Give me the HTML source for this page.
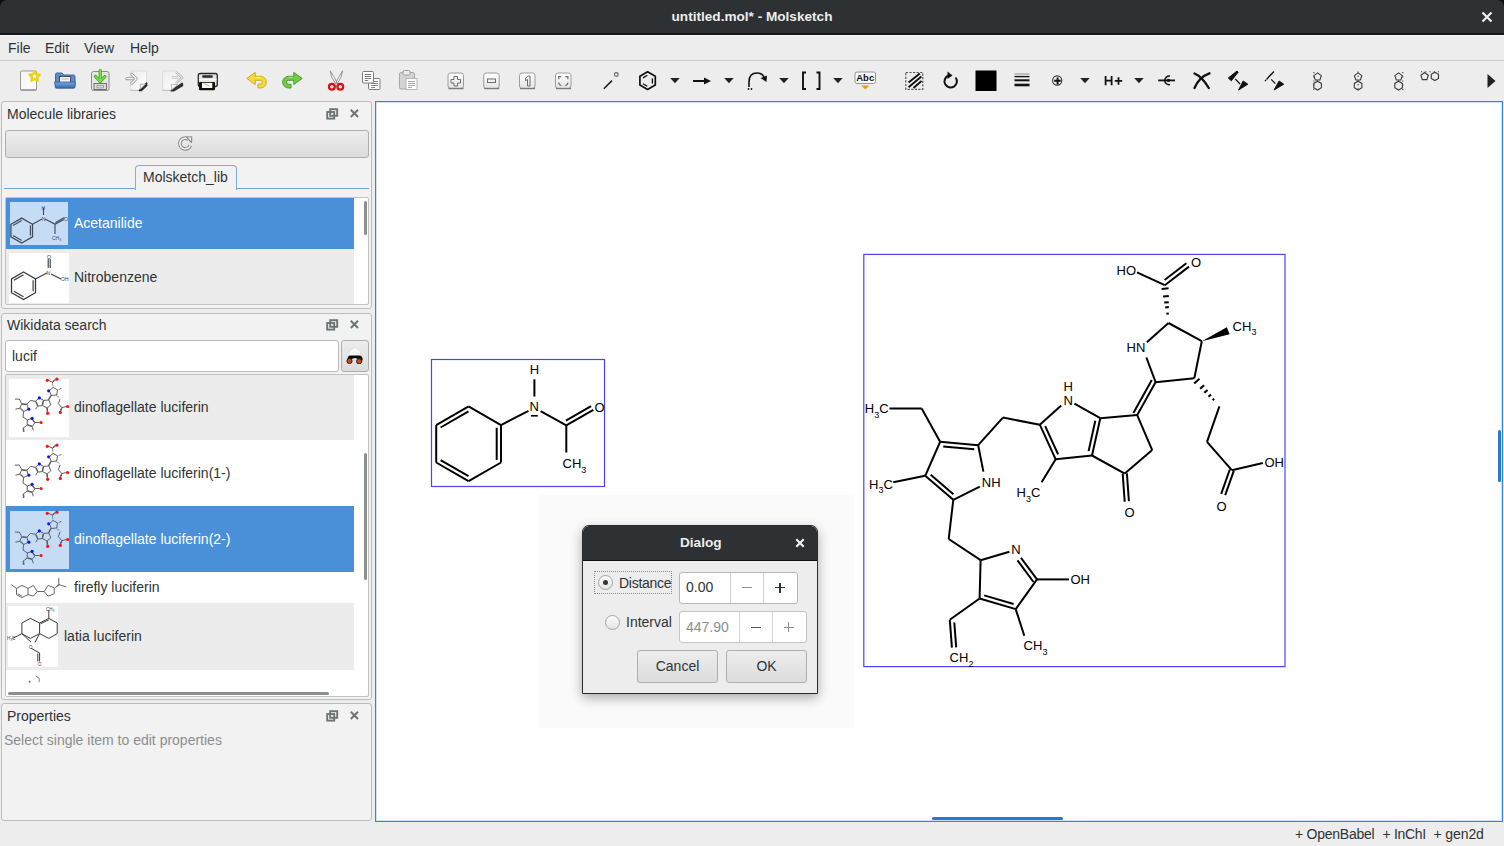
<!DOCTYPE html>
<html><head><meta charset="utf-8">
<style>
*{margin:0;padding:0;box-sizing:border-box}
html,body{width:1504px;height:846px;overflow:hidden;background:#ededed;font-family:"Liberation Sans",sans-serif;font-size:14px;color:#2e3436}
.a{position:absolute}
#title{left:0;top:0;width:1504px;height:35px;background:#2d3134;border-bottom:2px solid #141617;border-radius:7px 7px 0 0}
#title .t{left:0;width:1504px;top:9px;text-align:center;color:#eeeeec;font-weight:bold;font-size:13.6px;line-height:16px}
#menubar{left:0;top:35px;width:1504px;height:25px;background:#ededed;border-top:1px solid #f8f8f8}
#menubar span{position:absolute;top:4px;line-height:16px;color:#2e3436}
#sep{left:0;top:60px;width:1504px;height:1px;background:#cfcfcf}
.dock{background:#f2f2f2;border:1px solid #bdbdbd;border-radius:3px}
.dt{position:absolute;left:7px;line-height:16px;color:#2e3436}
.frame{background:#fff;border:1px solid #c2c2c2;border-radius:2px;overflow:hidden}
.row{position:absolute;left:0;width:348px}
.sel{background:#4a90d9;color:#fff}
.alt{background:#ececec}
.lbl{position:absolute;line-height:16px}
#canvas{left:375px;top:101px;width:1128px;height:721px;background:#fff;border:1px solid #3584e4;box-shadow:inset 0 0 0 1px rgba(53,132,228,0.25)}
#status{left:0;top:822px;width:1504px;height:24px;background:#ededed}
.btn{background:linear-gradient(#ededed,#dcdcdc);border:1px solid #aeaeae;border-radius:3px}
</style></head><body>
<div class="a" style="left:0;top:0;width:1504px;height:12px;background:#0c0d0e"></div>
<div id="title" class="a"><div class="t a">untitled.mol* - Molsketch</div>
<svg class="a" style="left:1481px;top:11px" width="12" height="12" viewBox="0 0 12 12"><path d="M1.5 1.5L10.5 10.5M10.5 1.5L1.5 10.5" stroke="#eeeeec" stroke-width="2.2"/></svg>
</div>
<div id="menubar" class="a"><span style="left:8px">File</span><span style="left:45px">Edit</span><span style="left:84px">View</span><span style="left:130px">Help</span></div>
<div id="sep" class="a"></div>
<svg class="a" style="left:0;top:0" width="1504" height="101" viewBox="0 0 1504 101">
<defs>
<linearGradient id="gz" x1="0" y1="0" x2="0" y2="1"><stop offset="0" stop-color="#ffffff"/><stop offset="1" stop-color="#e4e4e4"/></linearGradient>
<linearGradient id="gp" x1="0" y1="0" x2="1" y2="1"><stop offset="0" stop-color="#f4f4f4"/><stop offset="1" stop-color="#ffffff"/></linearGradient>
<linearGradient id="gb" x1="0" y1="0" x2="0" y2="1"><stop offset="0" stop-color="#7ea6d8"/><stop offset="1" stop-color="#3a6db5"/></linearGradient>
</defs>
<!-- new -->
<rect x="20.5" y="71" width="16" height="19" rx="1" fill="url(#gp)" stroke="#9a9a9a" stroke-width="1"/>
<path d="M20.5 90 h16" stroke="#8a8a8a" stroke-width="1.2"/>
<path d="M34.6 71.0 L36.1 74.3 L39.7 74.7 L37.1 77.2 L37.8 80.8 L34.6 79.0 L31.4 80.8 L32.1 77.2 L29.5 74.7 L33.1 74.3Z" fill="#fffbe0" stroke="#eed21a" stroke-width="2.4" stroke-linejoin="round"/>
<!-- open -->
<path d="M55.5 74.5 q0-1.5 1.5-1.5 h5 l2 2 h9.5 q1.5 0 1.5 1.5 v10 q0 1.5-1.5 1.5 h-16.5 q-1.5 0-1.5-1.5z" fill="#5a8ccc" stroke="#3b69a8" stroke-width="1"/>
<rect x="59.5" y="76.5" width="11" height="6" fill="#f2f2f2" stroke="#333" stroke-width="0.8"/>
<path d="M61.5 79 h7" stroke="#aaa" stroke-width="0.8"/>
<path d="M54.5 82 h21 l-1 6 h-19z" fill="url(#gb)" stroke="#2f5fa0" stroke-width="0.8"/>
<!-- save -->
<rect x="91.5" y="71.5" width="17.5" height="19" rx="2" fill="#e6e6e6" stroke="#8c8c8c" stroke-width="1"/>
<rect x="94" y="83.5" width="12.5" height="6" fill="#dcdcdc" stroke="#666" stroke-width="0.9"/>
<rect x="97" y="85.5" width="6.5" height="2.4" fill="none" stroke="#888" stroke-width="0.7"/>
<path d="M100.2 70.5 v10 M95.5 76.5 l4.7 5 l4.7-5" fill="none" stroke="#3faa1c" stroke-width="3.2" stroke-linecap="round" stroke-linejoin="round"/>
<path d="M100.2 70.5 v10 M95.5 76.5 l4.7 5 l4.7-5" fill="none" stroke="#7be04a" stroke-width="1.6" stroke-linecap="round" stroke-linejoin="round"/>
<!-- import -->
<defs><linearGradient id="gpg" x1="0" y1="0" x2="1" y2="1"><stop offset="0" stop-color="#ececec"/><stop offset="1" stop-color="#ffffff"/></linearGradient></defs>
<path d="M130.5 71 h16 v12 l-7.3 7.5 h-8.7z" fill="url(#gpg)" stroke="#dadada" stroke-width="0.9"/>
<path d="M130.5 90.3 h9" stroke="#b8b8b8" stroke-width="0.9"/>
<path d="M146.6 83 L139.3 90.6 L141.5 90.6 L146.8 85.5z" fill="#2b2b2b" stroke="#2b2b2b" stroke-width="1.4" stroke-linejoin="round"/>
<path d="M140.3 84.3 v5 l5.2-5.2z" fill="#fafafa" stroke="#9c9c9c" stroke-width="0.7"/>
<path d="M126.8 78.7 h6.3 M131.8 74.2 l4.4 4.5 l-4.4 4.5" fill="none" stroke="#9a9a9a" stroke-width="3" stroke-linecap="round" stroke-linejoin="round"/>
<path d="M126.8 78.7 h6.3 M131.8 74.2 l4.4 4.5 l-4.4 4.5" fill="none" stroke="#fbfbfb" stroke-width="1.3" stroke-linecap="round" stroke-linejoin="round"/>
<!-- export -->
<path d="M162.6 71 h13.5 l1.5 1.5 v8 l-6.5 10 h-8.5z" fill="url(#gpg)" stroke="#dadada" stroke-width="0.9"/>
<path d="M162.6 90.3 h9" stroke="#b8b8b8" stroke-width="0.9"/>
<path d="M182.2 83.3 L171.3 90.7 L173.5 90.7 L182.5 85.5z" fill="#303030" stroke="#303030" stroke-width="1.6" stroke-linejoin="round"/>
<path d="M171.5 84.3 v5.6 l6-5.2z" fill="#fafafa" stroke="#a0a0a0" stroke-width="0.7"/>
<path d="M171.8 76.5 h5.8 M171.8 78.4 h5.8" stroke="#c4c4c4" stroke-width="0.9"/>
<path d="M176 72 l6.2 5.6 l-6.2 5.6" fill="none" stroke="#b0b0b0" stroke-width="2.2" stroke-linejoin="round"/>
<path d="M176 72 l6.2 5.6 l-6.2 5.6" fill="none" stroke="#fbfbfb" stroke-width="0.9" stroke-linejoin="round"/>
<!-- print -->
<rect x="198.3" y="73.5" width="19" height="13" rx="2" fill="#e2e4e0" stroke="#262626" stroke-width="1.3"/>
<rect x="202.2" y="75.2" width="10.6" height="2.5" rx="1" fill="#2a2a2a"/>
<path d="M199 79.6 h17.6" stroke="#fafafa" stroke-width="1.4"/>
<rect x="199" y="82" width="16" height="8.2" rx="1" fill="#0e0e0e"/>
<rect x="202" y="82.8" width="10.3" height="5.2" fill="#f6f8f4"/>
<path d="M203.5 83.5 l6 2.5" stroke="#8fd07a" stroke-width="1"/>
<!-- undo -->
<path d="M246.8 78.4 L255.2 72.4 V76.3 H260.5 A5.85 5.85 0 0 1 260.5 88 H258 V84.2 H260.5 A1.95 1.95 0 0 0 260.5 80.3 H255.2 V84.5 Z" fill="#f6da3e" stroke="#c9a40c" stroke-width="0.9" stroke-linejoin="round"/>
<path d="M256 77.3 H260.5" stroke="#fff7b0" stroke-width="0.8"/>
<!-- redo -->
<path d="M302.2 78.4 L293.8 72.4 V76.3 H288.5 A5.85 5.85 0 0 0 288.5 88 H291 V84.2 H288.5 A1.95 1.95 0 0 1 288.5 80.3 H293.8 V84.5 Z" fill="#73cc45" stroke="#3b951b" stroke-width="0.9" stroke-linejoin="round"/>
<path d="M293 77.3 H288.5" stroke="#c6f0a8" stroke-width="0.8"/>
<!-- cut -->
<path d="M330.2 70.8 Q330.5 77 335.5 83.5 L337 82.5 Q333.5 76 330.2 70.8z M342.6 70.8 Q342.3 77 337.3 83.5 L335.8 82.5 Q339.3 76 342.6 70.8z" fill="#fafafa" stroke="#8a8a8a" stroke-width="0.9" stroke-linejoin="round"/>
<circle cx="331.9" cy="86.8" r="2.9" fill="none" stroke="#d4161a" stroke-width="2.3"/>
<circle cx="340.3" cy="86.8" r="2.9" fill="none" stroke="#d4161a" stroke-width="2.3"/>
<!-- copy -->
<rect x="368.5" y="78.5" width="11.5" height="11" rx="1" fill="#fff" stroke="#7c7c7c" stroke-width="1"/>
<path d="M371 81.5 h7 M371 83.5 h7 M371 85.5 h7 M371 87.5 h4" stroke="#8a8a8a" stroke-width="1"/>
<rect x="362.5" y="71.5" width="11" height="11.5" rx="1" fill="#fff" stroke="#7c7c7c" stroke-width="1"/>
<path d="M364.8 74.5 h6.4 M364.8 76.5 h6.4 M364.8 78.5 h6.4 M364.8 80.5 h3.5" stroke="#7a7a7a" stroke-width="1"/>
<!-- paste -->
<rect x="399.5" y="72.5" width="15" height="16.5" rx="1.5" fill="#d4d4d4" stroke="#a8a8a8" stroke-width="1"/>
<rect x="403" y="70.5" width="7" height="4.5" rx="1.5" fill="#ececec" stroke="#9a9a9a" stroke-width="1"/>
<rect x="406" y="78.5" width="11" height="11" fill="#fff" stroke="#b4b4b4" stroke-width="1"/>
<path d="M408 81.5 h7 M408 83.5 h7 M408 85.5 h7 M408 87.5 h4" stroke="#a8a8a8" stroke-width="1"/>
<!-- zoom boxes -->
<g fill="url(#gz)" stroke="#9c9c9c" stroke-width="1">
<rect x="448" y="73" width="15.5" height="15.5" rx="2.5"/>
<rect x="483.7" y="73" width="15.5" height="15.5" rx="2.5"/>
<rect x="519.5" y="73" width="15.5" height="15.5" rx="2.5"/>
<rect x="555.5" y="73" width="15.5" height="15.5" rx="2.5"/>
</g>
<g stroke="#6e6e6e" stroke-width="1" fill="none">
<path d="M463.5 88.5 h-15" stroke="#7a7a7a" stroke-width="1.4"/>
<path d="M499.2 88.5 h-15" stroke="#7a7a7a" stroke-width="1.4"/>
<path d="M535 88.5 h-15" stroke="#7a7a7a" stroke-width="1.4"/>
<path d="M571 88.5 h-15" stroke="#7a7a7a" stroke-width="1.4"/>
<path d="M454 76.5 h3.5 v3 h3 v3.5 h-3 v3 h-3.5 v-3 h-3 v-3.5 h3z"/>
<rect x="487.5" y="79" width="8" height="3.5"/>
<path d="M525.5 78 l3-2 h1.5 v10 h-2.5 v-6.5 l-2 1.2z"/>
<path d="M558.7 79.3 v-2.6 h2.6 M565.3 76.7 h2.6 v2.6 M558.7 82.5 q0.3 2.8 2.8 3 M567.9 82.5 q-0.3 2.8 -2.8 3" stroke-width="1.2"/>
</g>
<!-- draw bond -->
<path d="M603.8 88.8 L612 80.6" stroke="#222" stroke-width="1.6"/>
<circle cx="616.3" cy="74.5" r="1.9" fill="none" stroke="#666" stroke-width="1.1"/>
<!-- hexagon -->
<path d="M647.6 71.8 L655.3 76.3 V85.1 L647.6 89.5 L639.9 85.1 V76.3Z" fill="none" stroke="#111" stroke-width="1.7" stroke-linejoin="round"/>
<path d="M643.4 77.6 l3.5-2.1 M652.4 79 v4 M643.4 84 l3.5 2" stroke="#111" stroke-width="1.3" stroke-linecap="round"/>
<!-- dropdown triangles -->
<g fill="#222">
<path d="M670.2 78 h9.5 l-4.75 5.3z"/>
<path d="M724.2 78 h9.5 l-4.75 5.3z"/>
<path d="M779.2 78 h9.5 l-4.75 5.3z"/>
<path d="M833.2 78 h9.5 l-4.75 5.3z"/>
<path d="M1080.2 78 h9.5 l-4.75 5.3z"/>
<path d="M1134.2 78 h9.5 l-4.75 5.3z"/>
</g>
<!-- arrow -->
<path d="M693 81 h12" stroke="#111" stroke-width="2"/>
<path d="M704 77.5 l7 3.5 l-7 3.5z" fill="#111"/>
<!-- curved arrow -->
<path d="M749 87 V82 Q749 73 757 73 Q762 73 764 77" fill="none" stroke="#111" stroke-width="1.6"/>
<path d="M760.5 78 l6.5-2.5 l-0.5 6.5z" fill="#111"/>
<circle cx="748.5" cy="89" r="0.9" fill="#111"/><circle cx="751.5" cy="89" r="0.9" fill="#111"/>
<!-- brackets -->
<path d="M806 72.5 h-3 v16.5 h3 M816.5 72.5 h3 v16.5 h-3" fill="none" stroke="#111" stroke-width="1.9"/>
<!-- Abc -->
<rect x="855" y="72" width="20.5" height="11.5" rx="2" fill="#fafafa" stroke="#888" stroke-width="0.9"/>
<text x="865.2" y="81.3" text-anchor="middle" font-family="Liberation Sans" font-weight="bold" font-size="9.5" fill="#111">Abc</text>
<path d="M861 85.5 h8.5 l-4.25 4z" fill="#f39c12"/>
<!-- hatch box -->
<rect x="905.8" y="72.5" width="17" height="16.8" fill="none" stroke="#555" stroke-width="1.2" stroke-dasharray="2.2 1.4"/>
<path d="M908.6 82.5 l11.2-9 M908.6 87.3 l12.8-10.8 M913.5 88 l8-7" stroke="#111" stroke-width="1.9"/>
<!-- rotate -->
<path d="M955.6 77.5 A6.2 6.2 0 1 1 948.5 75.5" fill="none" stroke="#111" stroke-width="2"/>
<path d="M947.5 71.5 l5 4 l-5 3.5z" fill="#111"/>
<!-- black square -->
<rect x="975.5" y="70.5" width="21" height="20.5" fill="#000"/>
<!-- lines -->
<path d="M1014.5 74 h15" stroke="#777" stroke-width="0.8"/>
<path d="M1014.5 76.6 h15" stroke="#111" stroke-width="1.4"/>
<path d="M1014.5 80.3 h15" stroke="#111" stroke-width="2"/>
<path d="M1014.5 85 h15" stroke="#111" stroke-width="2.6"/>
<!-- circle plus -->
<circle cx="1057.2" cy="80.5" r="4.6" fill="none" stroke="#333" stroke-width="1.1"/>
<path d="M1054.2 80.8 h6.6 M1057.6 77.6 v6.6" stroke="#111" stroke-width="1.9"/>
<!-- H+ -->
<path d="M1105.6 76 v9.2 M1111.6 76 v9.2 M1105.6 80.6 h6 M1114.8 80.9 h7.4 M1118.5 77.2 v7.5" stroke="#111" stroke-width="1.8"/>
<!-- -o- -->
<path d="M1158.2 80.4 h16.8" stroke="#111" stroke-width="1.8"/>
<path d="M1170 76.2 a4.3 4.3 0 1 0 0 8.4" fill="none" stroke="#111" stroke-width="1.5"/>
<circle cx="1168.4" cy="80.4" r="1.7" fill="#111"/>
<!-- X -->
<path d="M1194.5 73.5 Q1202 76.5 1208.8 88 M1209.5 73.3 Q1199 77 1194.5 88" fill="none" stroke="#111" stroke-width="2.3" stroke-linecap="round"/>
<!-- wedges -->
<path d="M1228.3 78 L1231.3 80.8 L1238.2 72.2 L1237 71z" fill="#111" stroke="#111" stroke-width="1" stroke-linejoin="round"/>
<path d="M1235.3 79 l4.8 5" stroke="#111" stroke-width="1.2"/>
<path d="M1238.6 90 L1243.2 81 L1247.8 84.2z" fill="#111" stroke="#111" stroke-width="1" stroke-linejoin="round"/>
<path d="M1265 81 l1-1 M1266.5 79.5 l2.2-2.4 M1268.2 77.5 l3.2-3.4 M1270.1 75.6 l3.8-4" stroke="#111" stroke-width="1.4"/>
<path d="M1271.1 79.3 l4.3 4.3" stroke="#111" stroke-width="1.2"/>
<path d="M1274.1 90 L1279.1 81 L1283.7 84.2z" fill="#111" stroke="#111" stroke-width="1" stroke-linejoin="round"/>
<!-- align icons -->
<path d="M1317.6 72.9 L1321.3 75.6 L1319.9 80.0 L1315.3 80.0 L1313.9 75.6ZM1317.6 81.2 L1321.4 83.4 L1321.4 87.8 L1317.6 90.0 L1313.8 87.8 L1313.8 83.4ZM1358.1 72.9 L1361.8 75.6 L1360.4 80.0 L1355.8 80.0 L1354.4 75.6ZM1358.1 81.2 L1361.9 83.4 L1361.9 87.8 L1358.1 90.0 L1354.3 87.8 L1354.3 83.4ZM1398.6 72.9 L1402.3 75.6 L1400.9 80.0 L1396.3 80.0 L1394.9 75.6ZM1398.6 81.2 L1402.4 83.4 L1402.4 87.8 L1398.6 90.0 L1394.8 87.8 L1394.8 83.4ZM1424.6 72.5 L1428.3 75.2 L1426.9 79.6 L1422.3 79.6 L1420.9 75.2ZM1434.9 72.2 L1438.5 74.3 L1438.5 78.5 L1434.9 80.6 L1431.3 78.5 L1431.3 74.3Z" fill="none" stroke="#3a3a3a" stroke-width="1.1"/>
<g stroke="#444" stroke-width="1.1" stroke-dasharray="1.2 3">
<path d="M1313.8 72 v18 M1358.1 71.5 v19 M1402.8 72 v18 M1421 71.8 h18"/>
</g>
<path d="M1487.5 74 l8 7 l-8 7z" fill="#222"/>
</svg>


<!-- dock 1 -->
<div class="a dock" style="left:1px;top:101px;width:371px;height:208px"></div>
<div class="a dt" style="top:106px">Molecule libraries</div>
<svg class="a" style="left:326px;top:108px" width="34" height="12" viewBox="0 0 34 12"><g fill="none" stroke="#6e7373" stroke-width="1.9"><rect x="4.2" y="1.2" width="7" height="6.6"/><rect x="1.2" y="4" width="7" height="6.6"/></g><path d="M24.8 1.8L32 9M32 1.8L24.8 9" stroke="#6e7373" stroke-width="2"/></svg>
<div class="a btn" style="left:5px;top:130px;width:364px;height:28px"></div>
<svg class="a" style="left:177px;top:135px" width="17" height="17" viewBox="0 0 17 17"><path d="M13.3 10.5 A5.4 5.4 0 1 1 11.5 4.2" fill="none" stroke="#8a8a8a" stroke-width="3.6"/><path d="M13.3 10.5 A5.4 5.4 0 1 1 11.5 4.2" fill="none" stroke="#f4f4f4" stroke-width="1.6"/><path d="M9.5 2.2 L14.8 1.8 L14.5 7.5z" fill="#f4f4f4" stroke="#8a8a8a" stroke-width="1.1" stroke-linejoin="round"/></svg>
<div class="a" style="left:4px;top:188px;width:365px;height:2px;border-top:1px solid #6fa5e0"></div>
<div class="a" style="left:135px;top:165px;width:102px;height:25px;background:#f2f2f2;border:1px solid #7eaee4;border-bottom:none;border-radius:4px 4px 0 0"></div>
<div class="a lbl" style="left:143px;top:169px">Molsketch_lib</div>
<div class="a frame" style="left:5px;top:197px;width:364px;height:108px"></div>

<!-- dock 2 -->
<div class="a dock" style="left:1px;top:313px;width:371px;height:387px"></div>
<div class="a dt" style="top:317px">Wikidata search</div>
<svg class="a" style="left:326px;top:319px" width="34" height="12" viewBox="0 0 34 12"><g fill="none" stroke="#6e7373" stroke-width="1.9"><rect x="4.2" y="1.2" width="7" height="6.6"/><rect x="1.2" y="4" width="7" height="6.6"/></g><path d="M24.8 1.8L32 9M32 1.8L24.8 9" stroke="#6e7373" stroke-width="2"/></svg>
<div class="a" style="left:5px;top:340px;width:334px;height:32px;background:#fff;border:1px solid #bababa;border-radius:3px"></div>
<div class="a lbl" style="left:12px;top:348px">lucif</div>
<div class="a btn" style="left:341px;top:340px;width:28px;height:32px"></div>
<svg class="a" style="left:345px;top:346px" width="20" height="18" viewBox="0 0 20 18"><path d="M3.8 10.5 Q4.5 4 7 3 L10 1.5 L13 3 Q15.5 4 16.2 10.5z" fill="#fafafa" stroke="#d8d8d8" stroke-width="0.7"/><path d="M2.2 14.5 Q2.5 10 5 9.5 H15 Q17.5 10 17.8 14.5 L13.5 13 L10 12 L6.5 13z" fill="#0d0d0d"/><circle cx="4.5" cy="15" r="2.6" fill="#c4501b" stroke="#1a1a1a" stroke-width="0.9"/><circle cx="14.1" cy="15.3" r="2.6" fill="#c4501b" stroke="#1a1a1a" stroke-width="0.9"/></svg>
<div class="a frame" style="left:5px;top:374px;width:364px;height:323px"></div>
<div class="a" style="left:6px;top:198px;width:348px;height:51px;background:#4a90d9"></div>
<div class="a" style="left:6px;top:249px;width:348px;height:55px;background:#ececec"></div>
<div class="a" style="left:9.5px;top:202px;width:58.5px;height:43px;background:#c6dcf4"></div>
<div class="a" style="left:9px;top:252.5px;width:60px;height:50px;background:#fff"></div>
<div class="a lbl" style="left:74px;top:215px;color:#fff">Acetanilide</div>
<div class="a lbl" style="left:74px;top:269px">Nitrobenzene</div>
<div class="a" style="left:364px;top:200.5px;width:3px;height:34px;border-radius:2px;background:#8c8f90"></div>
<div class="a" style="left:5px;top:374px;width:364px;height:323px;overflow:hidden">
<div class="a" style="left:1px;top:1px;width:348px;height:65px;background:#ececec"></div>
<div class="a" style="left:1px;top:132px;width:348px;height:66px;background:#4a90d9"></div>
<div class="a" style="left:1px;top:229px;width:348px;height:67px;background:#ececec"></div>
</div>
<div class="a" style="left:9px;top:379px;width:60px;height:58px;background:#fff"></div>
<div class="a" style="left:9.5px;top:510.5px;width:59.5px;height:58px;background:#c6dcf4"></div>
<div class="a" style="left:8px;top:606px;width:50px;height:60.5px;background:#fff"></div>
<div class="a lbl" style="left:74px;top:399px">dinoflagellate luciferin</div>
<div class="a lbl" style="left:74px;top:465px">dinoflagellate luciferin(1-)</div>
<div class="a lbl" style="left:74px;top:531px;color:#fff">dinoflagellate luciferin(2-)</div>
<div class="a lbl" style="left:74px;top:579px">firefly luciferin</div>
<div class="a lbl" style="left:64px;top:628px">latia luciferin</div>
<div class="a" style="left:364px;top:453px;width:3px;height:127px;border-radius:2px;background:#8c8f90"></div>
<div class="a" style="left:8px;top:692px;width:321px;height:3px;border-radius:2px;background:#8c8f90"></div>
<svg class="a" style="left:0;top:0" width="372" height="700" viewBox="0 0 372 700">
<path d="M21.7 218.1 L32.5 224.3 L32.5 236.8 L21.7 243.1 L10.9 236.8 L10.9 224.3Z" stroke="#3d4a5c" stroke-width="1.3" fill="none"/><path d="M30.4 225.6L30.4 235.6" stroke="#3d4a5c" stroke-width="1.1700000000000002"/><path d="M21.7 240.6L13.0 235.6" stroke="#3d4a5c" stroke-width="1.1700000000000002"/><path d="M13.0 225.6L21.7 220.6" stroke="#3d4a5c" stroke-width="1.1700000000000002"/>
<path d="M32.5 224.3L42 219 M43.5 208 V215 M45 219 L55 224.2 L55 234 M55 224.2 L64 219.5 M55.5 222.5 L64.5 217.5" stroke="#3d4a5c" stroke-width="1.1" fill="none"/>
<text x="41.5" y="210" font-family="Liberation Sans" font-size="5" fill="#3d4a5c">H</text><text x="41.8" y="221" font-family="Liberation Sans" font-size="5" fill="#3d4a5c">N</text><text x="64" y="221" font-family="Liberation Sans" font-size="5" fill="#3d4a5c">O</text><text x="52" y="240" font-family="Liberation Sans" font-size="5" fill="#3d4a5c">CH₃</text>
<path d="M23.5 272.0 L35.5 278.9 L35.5 292.7 L23.5 299.6 L11.5 292.7 L11.5 278.9Z" stroke="#3a3a3a" stroke-width="1.3" fill="none"/><path d="M33.1 280.3L33.1 291.3" stroke="#3a3a3a" stroke-width="1.1700000000000002"/><path d="M23.5 296.8L13.9 291.3" stroke="#3a3a3a" stroke-width="1.1700000000000002"/><path d="M13.9 280.3L23.5 274.8" stroke="#3a3a3a" stroke-width="1.1700000000000002"/>
<path d="M35.5 278.9L47 273 M48.2 259 V268 M50.2 259 V268 M51 274 L61 279" stroke="#3a3a3a" stroke-width="1.1" fill="none"/>
<text x="47" y="259" font-family="Liberation Sans" font-size="5" fill="#3a3a3a">O</text><text x="46.5" y="275" font-family="Liberation Sans" font-size="5" fill="#3a3a3a">N</text><text x="61" y="281" font-family="Liberation Sans" font-size="5" fill="#3a3a3a">OH</text>
<path d="M48.8 380.5L52.6 382.2M52.6 382.2L55.9 379.7M52.5 381.5L55.5 379.2M53.1 386.1L52.8 386.1M53.1 385.2L52.6 385.3M53.1 384.6L52.5 384.6M53.1 383.7L52.3 383.8M53.1 382.7L52.1 382.7M53.1 387.4L50.1 390.0M53.1 387.4L57.6 389.9M57.6 389.9L56.6 395.0M50.1 392.1L51.3 395.5M56.6 395.0L51.3 395.5M51.3 395.5L48.8 400.0M50.8 395.2L48.3 399.7M56.6 395.7L57.3 395.0M57.4 396.4L58.0 395.9M58.0 397.0L58.4 396.6M58.6 397.5L58.9 397.2M59.1 398.0L59.3 397.8M60.1 398.8L58.4 403.7M58.4 403.7L61.8 407.6M61.8 407.6L66.0 406.6M61.5 407.5L60.3 410.8M62.0 407.7L60.8 411.0M48.8 400.0L50.8 404.8M50.8 404.8L47.1 408.0M46.8 408.1L47.1 411.9M47.4 408.0L47.7 411.8M47.1 408.0L42.6 405.6M48.8 400.0L43.7 400.4M43.7 400.4L42.6 405.6M43.1 400.8L42.1 405.0M40.2 398.4L43.7 400.4M38.4 398.7L35.4 401.3M35.4 401.3L37.6 406.1M36.2 401.5L38.0 405.4M37.6 406.1L42.6 405.6M37.6 406.1L35.7 409.2M35.4 401.3L30.4 400.4M30.4 400.4L27.0 404.1M27.0 404.1L27.7 407.8M21.8 403.7L27.0 404.1M22.2 404.3L26.5 404.7M21.8 403.7L19.3 399.1M19.3 399.1L14.9 399.1M21.8 403.7L19.7 408.3M19.7 408.3L15.4 409.2M19.7 408.3L23.6 411.6M20.5 408.2L23.6 410.9M23.6 411.6L27.2 409.8M23.6 411.6L23.0 417.0M23.0 417.0L27.3 419.9M27.3 419.9L31.3 418.7M32.9 419.6L35.1 422.5M32.4 419.9L34.6 422.9M35.1 422.5L32.1 426.6M35.1 422.5L39.4 422.5M32.1 426.6L27.2 425.1M31.9 425.9L27.8 424.7M27.2 425.1L27.3 419.9M32.1 426.6L33.3 430.3M27.2 425.1L23.1 428.1M23.1 428.1L23.4 431.9M23.7 428.4L24.0 431.8" stroke="#4d4d4d" stroke-width="0.9" fill="none"/><polygon points="57.6,389.9 61.5,388.9 61.1,388.0" fill="#4d4d4d"/><circle cx="48.7" cy="390.8" r="1.6" fill="#0a14ff"/><circle cx="39.3" cy="397.9" r="1.6" fill="#0a14ff"/><circle cx="28.8" cy="409.2" r="1.6" fill="#0a14ff"/><circle cx="32.1" cy="418.4" r="1.6" fill="#0a14ff"/><circle cx="47.3" cy="380.3" r="1.6" fill="#ff1010"/><circle cx="56.9" cy="379.2" r="1.6" fill="#ff1010"/><circle cx="47.7" cy="413.3" r="1.6" fill="#ff1010"/><circle cx="67.6" cy="406.5" r="1.6" fill="#ff1010"/><circle cx="60.3" cy="412.4" r="1.6" fill="#ff1010"/><circle cx="41.0" cy="422.5" r="1.6" fill="#ff1010"/>
<path d="M48.8 446.5L52.6 448.2M52.6 448.2L55.9 445.7M52.5 447.5L55.5 445.2M53.1 452.1L52.8 452.1M53.1 451.2L52.6 451.3M53.1 450.6L52.5 450.6M53.1 449.7L52.3 449.8M53.1 448.7L52.1 448.7M53.1 453.4L50.1 456.0M53.1 453.4L57.6 455.9M57.6 455.9L56.6 461.0M50.1 458.1L51.3 461.5M56.6 461.0L51.3 461.5M51.3 461.5L48.8 466.0M50.8 461.2L48.3 465.7M56.6 461.7L57.3 461.0M57.4 462.4L58.0 461.9M58.0 463.0L58.4 462.6M58.6 463.5L58.9 463.2M59.1 464.0L59.3 463.8M60.1 464.8L58.4 469.7M58.4 469.7L61.8 473.6M61.8 473.6L66.0 472.6M61.5 473.5L60.3 476.8M62.0 473.7L60.8 477.0M48.8 466.0L50.8 470.8M50.8 470.8L47.1 474.0M46.8 474.1L47.1 477.9M47.4 474.0L47.7 477.8M47.1 474.0L42.6 471.6M48.8 466.0L43.7 466.4M43.7 466.4L42.6 471.6M43.1 466.8L42.1 471.0M40.2 464.4L43.7 466.4M38.4 464.7L35.4 467.3M35.4 467.3L37.6 472.1M36.2 467.5L38.0 471.4M37.6 472.1L42.6 471.6M37.6 472.1L35.7 475.2M35.4 467.3L30.4 466.4M30.4 466.4L27.0 470.1M27.0 470.1L27.7 473.8M21.8 469.7L27.0 470.1M22.2 470.3L26.5 470.7M21.8 469.7L19.3 465.1M19.3 465.1L14.9 465.1M21.8 469.7L19.7 474.3M19.7 474.3L15.4 475.2M19.7 474.3L23.6 477.6M20.5 474.2L23.6 476.9M23.6 477.6L27.2 475.8M23.6 477.6L23.0 483.0M23.0 483.0L27.3 485.9M27.3 485.9L31.3 484.7M32.9 485.6L35.1 488.5M32.4 485.9L34.6 488.9M35.1 488.5L32.1 492.6M35.1 488.5L39.4 488.5M32.1 492.6L27.2 491.1M31.9 491.9L27.8 490.7M27.2 491.1L27.3 485.9M32.1 492.6L33.3 496.3M27.2 491.1L23.1 494.1M23.1 494.1L23.4 497.9M23.7 494.4L24.0 497.8" stroke="#4d4d4d" stroke-width="0.9" fill="none"/><polygon points="57.6,455.9 61.5,454.9 61.1,454.0" fill="#4d4d4d"/><circle cx="48.7" cy="456.8" r="1.6" fill="#0a14ff"/><circle cx="39.3" cy="463.9" r="1.6" fill="#0a14ff"/><circle cx="28.8" cy="475.2" r="1.6" fill="#0a14ff"/><circle cx="32.1" cy="484.4" r="1.6" fill="#0a14ff"/><circle cx="47.3" cy="446.3" r="1.6" fill="#ff1010"/><circle cx="56.9" cy="445.2" r="1.6" fill="#ff1010"/><circle cx="47.7" cy="479.3" r="1.6" fill="#ff1010"/><circle cx="67.6" cy="472.5" r="1.6" fill="#ff1010"/><circle cx="60.3" cy="478.4" r="1.6" fill="#ff1010"/><circle cx="41.0" cy="488.5" r="1.6" fill="#ff1010"/>
<path d="M48.8 513.5L52.6 515.2M52.6 515.2L55.9 512.7M52.5 514.5L55.5 512.2M53.1 519.1L52.8 519.1M53.1 518.2L52.6 518.3M53.1 517.6L52.5 517.6M53.1 516.7L52.3 516.8M53.1 515.7L52.1 515.7M53.1 520.4L50.1 523.0M53.1 520.4L57.6 522.9M57.6 522.9L56.6 528.0M50.1 525.1L51.3 528.5M56.6 528.0L51.3 528.5M51.3 528.5L48.8 533.0M50.8 528.2L48.3 532.7M56.6 528.7L57.3 528.0M57.4 529.4L58.0 528.9M58.0 530.0L58.4 529.6M58.6 530.5L58.9 530.2M59.1 531.0L59.3 530.8M60.1 531.8L58.4 536.7M58.4 536.7L61.8 540.6M61.8 540.6L66.0 539.6M61.5 540.5L60.3 543.8M62.0 540.7L60.8 544.0M48.8 533.0L50.8 537.8M50.8 537.8L47.1 541.0M46.8 541.1L47.1 544.9M47.4 541.0L47.7 544.8M47.1 541.0L42.6 538.6M48.8 533.0L43.7 533.4M43.7 533.4L42.6 538.6M43.1 533.8L42.1 538.0M40.2 531.4L43.7 533.4M38.4 531.7L35.4 534.3M35.4 534.3L37.6 539.1M36.2 534.5L38.0 538.4M37.6 539.1L42.6 538.6M37.6 539.1L35.7 542.2M35.4 534.3L30.4 533.4M30.4 533.4L27.0 537.1M27.0 537.1L27.7 540.8M21.8 536.7L27.0 537.1M22.2 537.3L26.5 537.7M21.8 536.7L19.3 532.1M19.3 532.1L14.9 532.1M21.8 536.7L19.7 541.3M19.7 541.3L15.4 542.2M19.7 541.3L23.6 544.6M20.5 541.2L23.6 543.9M23.6 544.6L27.2 542.8M23.6 544.6L23.0 550.0M23.0 550.0L27.3 552.9M27.3 552.9L31.3 551.7M32.9 552.6L35.1 555.5M32.4 552.9L34.6 555.9M35.1 555.5L32.1 559.6M35.1 555.5L39.4 555.5M32.1 559.6L27.2 558.1M31.9 558.9L27.8 557.7M27.2 558.1L27.3 552.9M32.1 559.6L33.3 563.3M27.2 558.1L23.1 561.1M23.1 561.1L23.4 564.9M23.7 561.4L24.0 564.8" stroke="#4d5560" stroke-width="0.9" fill="none"/><polygon points="57.6,522.9 61.5,521.9 61.1,521.0" fill="#4d5560"/><circle cx="48.7" cy="523.8" r="1.6" fill="#0a14ff"/><circle cx="39.3" cy="530.9" r="1.6" fill="#0a14ff"/><circle cx="28.8" cy="542.2" r="1.6" fill="#0a14ff"/><circle cx="32.1" cy="551.4" r="1.6" fill="#0a14ff"/><circle cx="47.3" cy="513.3" r="1.6" fill="#ff1010"/><circle cx="56.9" cy="512.2" r="1.6" fill="#ff1010"/><circle cx="47.7" cy="546.3" r="1.6" fill="#ff1010"/><circle cx="67.6" cy="539.5" r="1.6" fill="#ff1010"/><circle cx="60.3" cy="545.4" r="1.6" fill="#ff1010"/><circle cx="41.0" cy="555.5" r="1.6" fill="#ff1010"/>
<path d="M11.1 584.6 L16.5 588.4 L21.9 585.4 L28 588.4 V594.6 L21.9 597.6 L16.5 594.6 V588.4 M17.8 593.8 l4.1 2.3 M28 588.4 L33.4 585.4 L37.3 591.5 L33.4 596.1 L28 594.6 M37.3 591.5 H44.2 M44.2 591.5 L48 585.4 L54.2 587.7 V593.8 L48 596.1 Z M58.8 584.6 V578 M58.8 584.6 L66.4 586.9" stroke="#555" stroke-width="0.9" fill="none"/>
<path d="M54.2 588.7 L59.3 585.3 L58.3 583.9z" fill="#555"/>
<path d="M21.9 623 L30.3 618.4 L39.6 623 V633.7 L30.3 638.4 L21.9 633.7z M39.6 623 L48.8 618.4 L57.2 623 V633.7 L48.8 638.4 L39.6 633.7 M48.8 618.4 V610 M21.9 633.7 L12.7 638.4 M21.9 633.7 L31.1 642.2 M39.6 633.7 L35 642.2 M31.1 648.3 L39.6 653 V661.5 M37.8 653.5 V661.5 M40.6 623.8 L48.8 619.8" stroke="#3a3a3a" stroke-width="1" fill="none"/>
<text x="46" y="611" font-family="Liberation Sans" font-size="4.5" fill="#3a3a3a">CH₃</text><text x="7" y="640" font-family="Liberation Sans" font-size="4.5" fill="#3a3a3a">H₃C</text><text x="29" y="649" font-family="Liberation Sans" font-size="4.5" fill="#3a3a3a">O</text><text x="38" y="665.5" font-family="Liberation Sans" font-size="4.5" fill="#3a3a3a">O</text>
<circle cx="29.6" cy="681.8" r="1" fill="#f33"/><path d="M35.7 676 l3.5 2.2 v4" stroke="#666" stroke-width="0.8" fill="none"/>
</svg>

<!-- dock 3 -->
<div class="a dock" style="left:1px;top:703px;width:371px;height:118px"></div>
<div class="a dt" style="top:708px">Properties</div>
<svg class="a" style="left:326px;top:710px" width="34" height="12" viewBox="0 0 34 12"><g fill="none" stroke="#6e7373" stroke-width="1.9"><rect x="4.2" y="1.2" width="7" height="6.6"/><rect x="1.2" y="4" width="7" height="6.6"/></g><path d="M24.8 1.8L32 9M32 1.8L24.8 9" stroke="#6e7373" stroke-width="2"/></svg>
<div class="a lbl" style="left:4px;top:732px;color:#8b8e8f">Select single item to edit properties</div>

<div id="canvas" class="a"></div>
<div class="a" style="left:932px;top:817px;width:131px;height:3px;border-radius:2px;background:#2a76d0"></div>
<div class="a" style="left:1498px;top:430px;width:3px;height:52px;border-radius:2px;background:#2a76d0"></div>
<svg class="a" style="left:0;top:0" width="1504" height="846" viewBox="0 0 1504 846">
<rect x="431.5" y="359.5" width="173" height="127" fill="none" stroke="#4646f8" stroke-width="1.2"/>
<rect x="863.8" y="254.4" width="421.2" height="412.2" fill="none" stroke="#4646f8" stroke-width="1.2"/>
<g stroke="#000" stroke-linecap="butt" fill="none">
<line x1="468.6" y1="406.4" x2="501.0" y2="425.1" stroke-width="2.0"/>
<line x1="501.0" y1="425.1" x2="501.0" y2="462.5" stroke-width="2.0"/>
<line x1="496.7" y1="427.7" x2="496.7" y2="459.9" stroke-width="2.0"/>
<line x1="501.0" y1="462.5" x2="468.6" y2="481.2" stroke-width="2.0"/>
<line x1="468.6" y1="481.2" x2="436.2" y2="462.5" stroke-width="2.0"/>
<line x1="468.5" y1="476.2" x2="440.6" y2="460.1" stroke-width="2.0"/>
<line x1="436.2" y1="462.5" x2="436.2" y2="425.1" stroke-width="2.0"/>
<line x1="436.2" y1="425.1" x2="468.6" y2="406.4" stroke-width="2.0"/>
<line x1="440.6" y1="427.5" x2="468.5" y2="411.4" stroke-width="2.0"/>
<line x1="501.0" y1="425.1" x2="528.5" y2="410.8" stroke-width="2.0"/>
<line x1="534.4" y1="379.3" x2="534.4" y2="396.5" stroke-width="2.0"/>
<line x1="531.0" y1="415.8" x2="537.8" y2="415.8" stroke-width="1.6"/>
<line x1="540.6" y1="411.2" x2="566.3" y2="425.4" stroke-width="2.0"/>
<line x1="566.3" y1="425.4" x2="593.3" y2="409.8" stroke-width="2.0"/>
<line x1="565.9" y1="420.7" x2="591.1" y2="406.1" stroke-width="2.0"/>
<line x1="566.3" y1="425.4" x2="566.3" y2="452.5" stroke-width="2.0"/>
<line x1="1137.0" y1="272.4" x2="1164.8" y2="285.2" stroke-width="2.0"/>
<line x1="1164.8" y1="285.2" x2="1189.0" y2="266.6" stroke-width="2.0"/>
<line x1="1164.6" y1="280.0" x2="1186.4" y2="263.2" stroke-width="2.0"/>
<line x1="1168.8" y1="313.4" x2="1166.4" y2="313.7" stroke-width="2.0"/>
<line x1="1168.8" y1="307.1" x2="1165.2" y2="307.5" stroke-width="2.0"/>
<line x1="1168.8" y1="302.2" x2="1164.2" y2="302.6" stroke-width="2.0"/>
<line x1="1168.8" y1="295.9" x2="1163.0" y2="296.4" stroke-width="2.0"/>
<line x1="1168.6" y1="288.3" x2="1161.6" y2="288.9" stroke-width="2.0"/>
<line x1="1168.5" y1="323.0" x2="1146.9" y2="342.2" stroke-width="2.0"/>
<line x1="1168.5" y1="323.0" x2="1201.8" y2="341.2" stroke-width="2.0"/>
<polygon points="1201.8,341.2 1229.6,334.2 1226.8,327.2" fill="#000" stroke="none"/>
<line x1="1201.8" y1="341.2" x2="1194.3" y2="378.3" stroke-width="2.0"/>
<line x1="1146.4" y1="357.5" x2="1155.6" y2="382.2" stroke-width="2.0"/>
<line x1="1194.3" y1="378.3" x2="1155.6" y2="382.2" stroke-width="2.0"/>
<line x1="1155.6" y1="382.2" x2="1137.2" y2="415.1" stroke-width="2.0"/>
<line x1="1151.8" y1="380.1" x2="1133.4" y2="413.0" stroke-width="2.0"/>
<line x1="1194.2" y1="383.4" x2="1199.4" y2="378.8" stroke-width="2.0"/>
<line x1="1200.1" y1="388.8" x2="1204.1" y2="385.2" stroke-width="2.0"/>
<line x1="1204.3" y1="392.8" x2="1207.6" y2="389.9" stroke-width="2.0"/>
<line x1="1208.5" y1="396.7" x2="1211.0" y2="394.4" stroke-width="2.0"/>
<line x1="1212.6" y1="400.3" x2="1214.2" y2="398.8" stroke-width="2.0"/>
<line x1="1219.4" y1="406.3" x2="1207.0" y2="441.8" stroke-width="2.0"/>
<line x1="1207.0" y1="441.8" x2="1231.8" y2="470.2" stroke-width="2.0"/>
<line x1="1231.8" y1="470.2" x2="1262.9" y2="463.0" stroke-width="2.0"/>
<line x1="1229.8" y1="469.5" x2="1221.2" y2="493.8" stroke-width="2.0"/>
<line x1="1233.8" y1="470.9" x2="1225.2" y2="495.2" stroke-width="2.0"/>
<line x1="1137.2" y1="415.1" x2="1152.2" y2="450.1" stroke-width="2.0"/>
<line x1="1152.2" y1="450.1" x2="1124.8" y2="473.6" stroke-width="2.0"/>
<line x1="1122.7" y1="473.8" x2="1124.7" y2="501.7" stroke-width="2.0"/>
<line x1="1126.9" y1="473.4" x2="1128.9" y2="501.3" stroke-width="2.0"/>
<line x1="1124.8" y1="473.6" x2="1092.0" y2="455.5" stroke-width="2.0"/>
<line x1="1137.2" y1="415.1" x2="1100.3" y2="418.2" stroke-width="2.0"/>
<line x1="1100.3" y1="418.2" x2="1092.0" y2="455.5" stroke-width="2.0"/>
<line x1="1095.3" y1="420.7" x2="1088.6" y2="451.1" stroke-width="2.0"/>
<line x1="1074.4" y1="403.6" x2="1100.3" y2="418.2" stroke-width="2.0"/>
<line x1="1061.2" y1="405.4" x2="1039.8" y2="424.7" stroke-width="2.0"/>
<line x1="1039.8" y1="424.7" x2="1055.7" y2="459.3" stroke-width="2.0"/>
<line x1="1045.2" y1="426.1" x2="1058.1" y2="454.3" stroke-width="2.0"/>
<line x1="1055.7" y1="459.3" x2="1092.0" y2="455.5" stroke-width="2.0"/>
<line x1="1055.7" y1="459.3" x2="1041.6" y2="482.3" stroke-width="2.0"/>
<line x1="1039.8" y1="424.7" x2="1002.9" y2="417.6" stroke-width="2.0"/>
<line x1="1002.9" y1="417.6" x2="978.2" y2="445.2" stroke-width="2.0"/>
<line x1="978.2" y1="445.2" x2="983.4" y2="471.6" stroke-width="2.0"/>
<line x1="940.1" y1="441.8" x2="978.2" y2="445.2" stroke-width="2.0"/>
<line x1="943.2" y1="446.4" x2="974.3" y2="449.2" stroke-width="2.0"/>
<line x1="940.1" y1="441.8" x2="921.7" y2="408.4" stroke-width="2.0"/>
<line x1="921.7" y1="408.4" x2="889.5" y2="408.4" stroke-width="2.0"/>
<line x1="940.1" y1="441.8" x2="925.2" y2="475.8" stroke-width="2.0"/>
<line x1="925.2" y1="475.8" x2="893.3" y2="482.2" stroke-width="2.0"/>
<line x1="925.2" y1="475.8" x2="953.3" y2="499.8" stroke-width="2.0"/>
<line x1="930.7" y1="474.8" x2="953.4" y2="494.3" stroke-width="2.0"/>
<line x1="953.3" y1="499.8" x2="979.8" y2="486.6" stroke-width="2.0"/>
<line x1="953.3" y1="499.8" x2="948.7" y2="539.0" stroke-width="2.0"/>
<line x1="948.7" y1="539.0" x2="980.6" y2="560.2" stroke-width="2.0"/>
<line x1="980.6" y1="560.2" x2="1009.4" y2="551.7" stroke-width="2.0"/>
<line x1="1021.0" y1="557.8" x2="1037.0" y2="579.4" stroke-width="2.0"/>
<line x1="1017.5" y1="560.4" x2="1033.5" y2="582.0" stroke-width="2.0"/>
<line x1="1037.0" y1="579.4" x2="1015.7" y2="609.1" stroke-width="2.0"/>
<line x1="1037.0" y1="579.4" x2="1069.0" y2="579.4" stroke-width="2.0"/>
<line x1="1015.7" y1="609.1" x2="979.6" y2="598.5" stroke-width="2.0"/>
<line x1="1013.6" y1="604.0" x2="984.2" y2="595.4" stroke-width="2.0"/>
<line x1="979.6" y1="598.5" x2="980.6" y2="560.2" stroke-width="2.0"/>
<line x1="1015.7" y1="609.1" x2="1024.3" y2="635.8" stroke-width="2.0"/>
<line x1="979.6" y1="598.5" x2="949.8" y2="619.8" stroke-width="2.0"/>
<line x1="949.8" y1="619.8" x2="951.9" y2="647.6" stroke-width="2.0"/>
<line x1="954.3" y1="622.5" x2="956.2" y2="647.3" stroke-width="2.0"/>
</g>
<g font-family="Liberation Sans" font-size="13" fill="#000">
<text x="529.7" y="374.2">H</text>
<text x="529.6" y="411.4">N</text>
<text x="594.4" y="411.8">O</text>
<text x="562.5" y="467.9">CH<tspan font-size="9" dy="4.6">3</tspan></text>
<text x="1116.6" y="274.9">HO</text>
<text x="1191.1" y="267.4">O</text>
<text x="1232.6" y="330.7">CH<tspan font-size="9" dy="4.6">3</tspan></text>
<text x="1126.5" y="351.8">HN</text>
<text x="1063.5" y="391">H</text>
<text x="1063.4" y="404.7">N</text>
<text x="981.8" y="487.2">NH</text>
<text x="864.8" y="413.4">H<tspan font-size="9" dy="4.6">3</tspan><tspan dy="-4.6">C</tspan></text>
<text x="869" y="488.6">H<tspan font-size="9" dy="4.6">3</tspan><tspan dy="-4.6">C</tspan></text>
<text x="1016.5" y="497.4">H<tspan font-size="9" dy="4.6">3</tspan><tspan dy="-4.6">C</tspan></text>
<text x="1124.4" y="517.2">O</text>
<text x="1264.4" y="467.2">OH</text>
<text x="1216.6" y="511">O</text>
<text x="1011.3" y="553.8">N</text>
<text x="1070.4" y="583.6">OH</text>
<text x="1023.6" y="650">CH<tspan font-size="9" dy="4.6">3</tspan></text>
<text x="949.6" y="661.9">CH<tspan font-size="9" dy="4.6">2</tspan></text>
</g>
</svg>
<div class="a" style="left:539px;top:495px;width:315px;height:233px;background:#fafafa"></div>
<div class="a" style="left:582px;top:525px;width:236px;height:169px;border-radius:7px 7px 0 0;box-shadow:0 4px 12px rgba(0,0,0,0.32);background:#ededed;border:1px solid #2a2c2e;overflow:hidden">
  <div class="a" style="left:0;top:0;width:234px;height:35px;background:#2d3134;border-bottom:1px solid #111"></div>
</div>
<div class="a" style="left:680px;top:535px;font-weight:bold;font-size:13.6px;line-height:16px;color:#eeeeec">Dialog</div>
<svg class="a" style="left:795px;top:538px" width="10" height="10" viewBox="0 0 10 10"><path d="M1.3 1.3L8.7 8.7M8.7 1.3L1.3 8.7" stroke="#f2f2f2" stroke-width="2.1"/></svg>
<div class="a" style="left:594px;top:571px;width:78px;height:23px;border:1px dotted #8c8c8c"></div>
<div class="a" style="left:598px;top:575px;width:15px;height:15px;border-radius:50%;border:1px solid #a4a4a4;background:linear-gradient(#fdfdfd,#e4e4e4)"></div>
<div class="a" style="left:603px;top:580px;width:5px;height:5px;border-radius:50%;background:#2e3436"></div>
<div class="a lbl" style="left:619px;top:575px;letter-spacing:-0.28px">Distance</div>
<div class="a" style="left:605px;top:615px;width:15px;height:15px;border-radius:50%;border:1px solid #a4a4a4;background:linear-gradient(#fdfdfd,#e4e4e4)"></div>
<div class="a lbl" style="left:626px;top:614px">Interval</div>
<div class="a" style="left:679px;top:572px;width:119px;height:32px;background:#fff;border:1px solid #b6b6b6;border-radius:3px"></div>
<div class="a" style="left:730px;top:573px;width:1px;height:30px;background:#cfcfcf"></div>
<div class="a" style="left:763px;top:573px;width:1px;height:30px;background:#cfcfcf"></div>
<div class="a lbl" style="left:686px;top:579px">0.00</div>
<div class="a" style="left:742px;top:587px;width:10px;height:1.3px;background:#8b8e8f"></div>
<div class="a" style="left:775px;top:586.5px;width:10px;height:1.8px;background:#2e3436"></div>
<div class="a" style="left:779.1px;top:582.5px;width:1.8px;height:10px;background:#2e3436"></div>
<div class="a" style="left:679px;top:611px;width:128px;height:32px;background:#fff;border:1px solid #c4c4c4;border-radius:3px"></div>
<div class="a" style="left:739px;top:612px;width:1px;height:30px;background:#d6d6d6"></div>
<div class="a" style="left:772px;top:612px;width:1px;height:30px;background:#d6d6d6"></div>
<div class="a lbl" style="left:686px;top:619px;color:#8b8e8f">447.90</div>
<div class="a" style="left:751px;top:626.5px;width:10px;height:1.5px;background:#555"></div>
<div class="a" style="left:783.5px;top:626.5px;width:10px;height:1.4px;background:#8b8e8f"></div>
<div class="a" style="left:787.8px;top:622px;width:1.4px;height:10px;background:#8b8e8f"></div>
<div class="a btn" style="left:637px;top:650px;width:81px;height:33px"></div>
<div class="a lbl" style="left:637px;width:81px;text-align:center;top:658px">Cancel</div>
<div class="a btn" style="left:726px;top:650px;width:81px;height:33px"></div>
<div class="a lbl" style="left:726px;width:81px;text-align:center;top:658px">OK</div>

<div id="status" class="a"><div class="a lbl" style="left:1295px;top:4px;letter-spacing:-0.25px">+ OpenBabel</div><div class="a lbl" style="left:1382.5px;top:4px;letter-spacing:-0.3px">+ InChI</div><div class="a lbl" style="left:1433.5px;top:4px;letter-spacing:-0.1px">+ gen2d</div></div>
</body></html>
